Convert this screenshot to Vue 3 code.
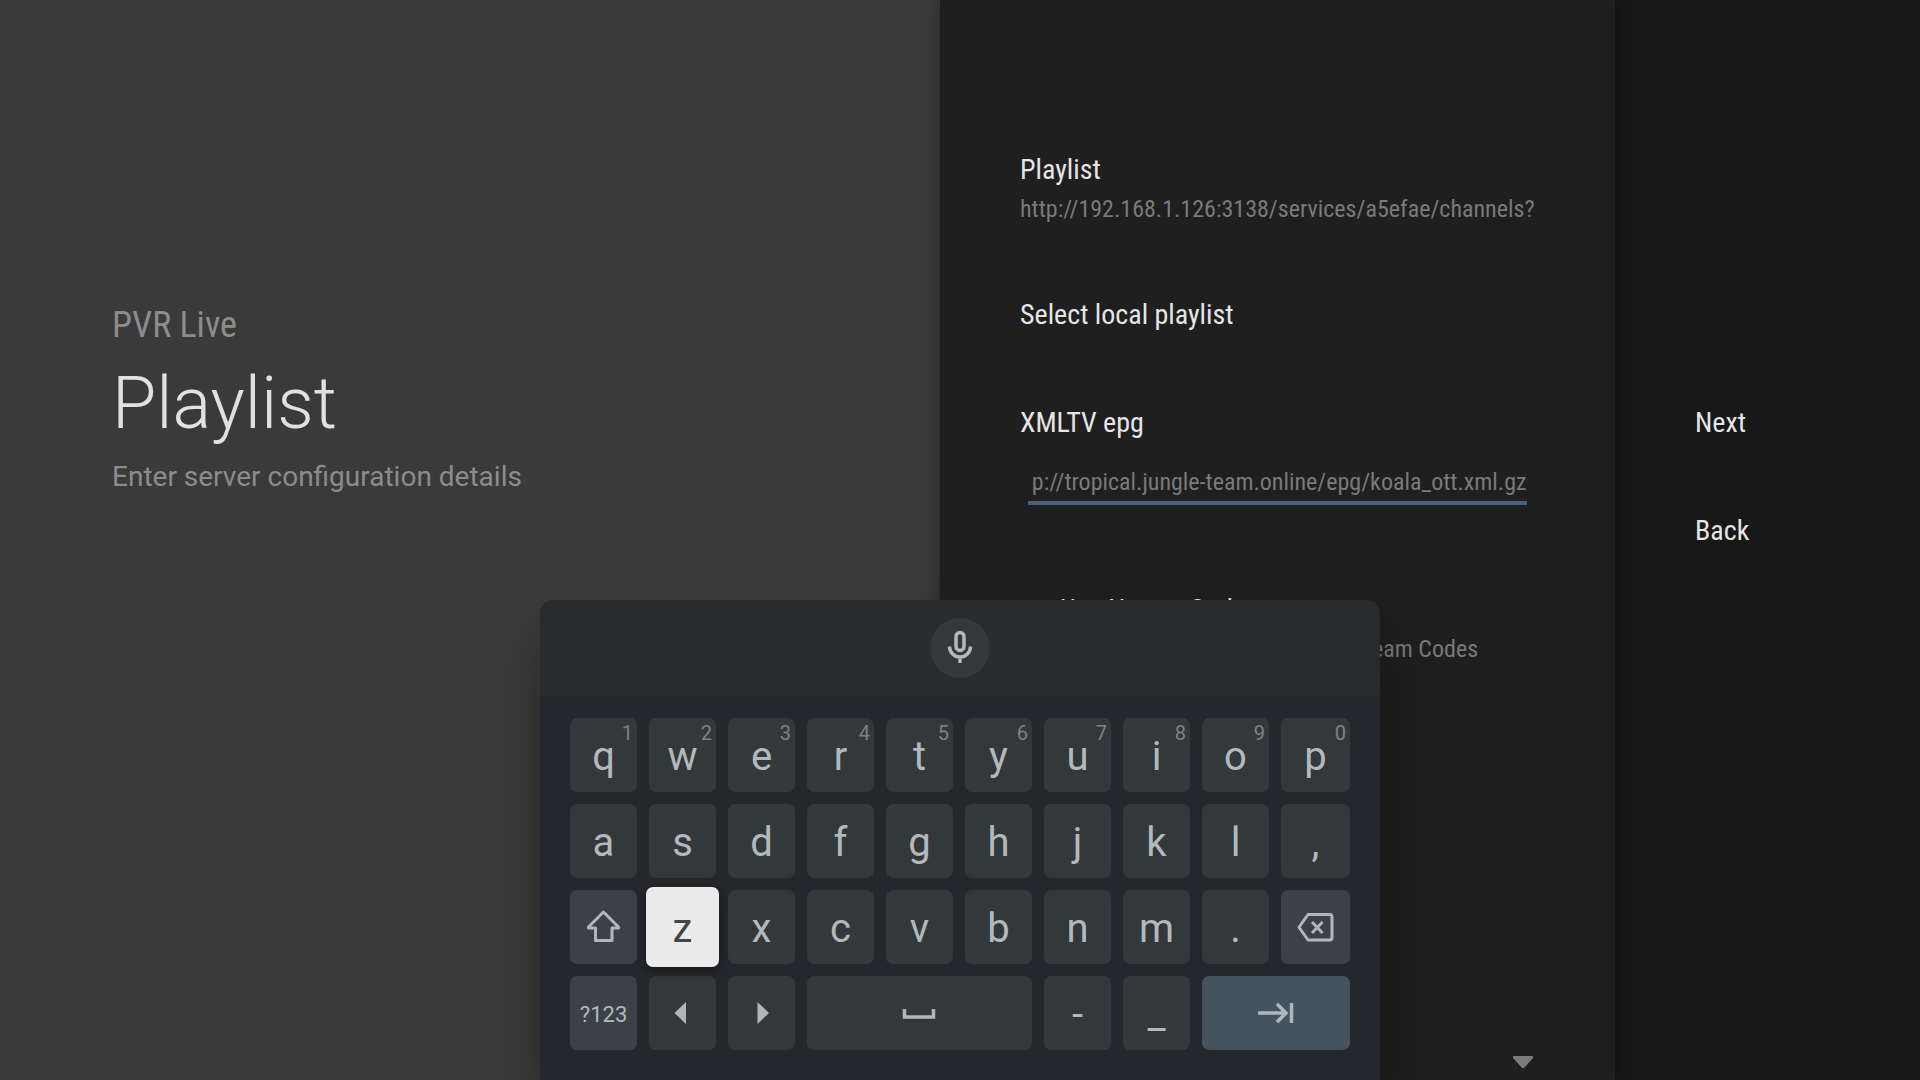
<script setup>
import { ref, onMounted } from 'vue'

const playlistUrl = 'http://192.168.1.126:3138/services/a5efae/channels?'
const epgUrl = ref('http://tropical.jungle-team.online/epg/koala_ott.xml.gz')
const neutroCodes = ref(false)
const epgInput = ref(null)

const rows = [
  'qwertyuiop'.split('').map((label, i) => ({ label, hint: String((i + 1) % 10) })),
  'asdfghjkl,'.split('').map((label) => ({ label })),
  [
    { icon: 'shift', name: 'Shift', kind: 'fn' },
    { label: 'z', kind: 'focused' },
    ...'xcvbnm.'.split('').map((label) => ({ label })),
    { icon: 'backspace', name: 'Backspace', kind: 'fn' },
  ],
  [
    { label: '?123', kind: 'fn', small: true },
    { icon: 'left', name: 'Cursor left' },
    { icon: 'right', name: 'Cursor right' },
    { icon: 'space', name: 'Space', span: 3 },
    { label: '-' },
    { label: '_' },
    { icon: 'tab', name: 'Next field', kind: 'action', span: 2 },
  ],
]
const keys = rows.flat()

// Show the end of the address, where the caret would be
onMounted(() => {
  epgInput.value.scrollLeft = epgInput.value.scrollWidth
})
</script>

<template>
  <div class="screen">
    <section class="guidance">
      <p class="breadcrumb">PVR Live</p>
      <h1>Playlist</h1>
      <p class="description">Enter server configuration details</p>
    </section>

    <main class="settings">
      <div class="item">
        <h2>Playlist</h2>
        <p class="value">{{ playlistUrl }}</p>
      </div>
      <div class="item">
        <h2>Select local playlist</h2>
      </div>
      <div class="item">
        <label class="title" for="epg">XMLTV epg</label>
        <input id="epg" ref="epgInput" v-model="epgUrl" class="field" type="text" />
      </div>
      <div class="item check">
        <input id="neutro" v-model="neutroCodes" type="checkbox" />
        <div class="check-text">
          <label class="title" for="neutro">Use Neutro Codes</label>
          <p class="value">Activate if the EPG uses Jungle Team Codes</p>
        </div>
      </div>
      <svg class="more" viewBox="0 0 20 12" aria-hidden="true"><path d="M0 0h20v2l-9 10h-2L0 2z" /></svg>
    </main>

    <nav class="actions">
      <button type="button">Next</button>
      <button type="button">Back</button>
    </nav>

    <div class="keyboard">
      <div class="toolbar">
        <button class="mic" type="button" aria-label="Voice input">
          <svg viewBox="0 0 36 36" width="36" height="36">
            <rect x="14" y="2.5" width="8" height="18" rx="4" />
            <path d="M7.5 16.500a10.500 10.500 0 0 0 21 0M18 27v6" />
          </svg>
        </button>
      </div>
      <div class="keys">
        <button
          v-for="(key, i) in keys"
          :key="i"
          type="button"
          class="key"
          :class="[key.kind, { small: key.small, wide2: key.span === 2, wide3: key.span === 3 }]"
          :aria-label="key.name"
        >
          <span v-if="key.label">{{ key.label }}</span>
          <span v-if="key.hint" class="hint">{{ key.hint }}</span>
          <svg v-if="key.icon" class="icon" viewBox="0 0 40 40" width="40" height="40">
            <path v-if="key.icon === 'shift'" d="M19.500 4 34.500 19v1h-6.500V32.500H11.500V20H4.500v-1z" />
            <template v-else-if="key.icon === 'backspace'">
              <path d="M12 6.500H33.500a2.500 2.500 0 0 1 2.500 2.500v20.500a2.500 2.500 0 0 1-2.500 2.500H12L3 19.250z" />
              <path d="m16 14 10.500 11M26.500 14 16 25" />
            </template>
            <path v-else-if="key.icon === 'left'" class="solid" d="M23 8v22L11.500 19z" />
            <path v-else-if="key.icon === 'right'" class="solid" d="M15.500 8v22L27 19z" />
            <path v-else-if="key.icon === 'space'" class="thick" d="M4.500 15v8h29v-8" />
            <path v-else d="M2 19H30M21 10l9 9-9 9M35.500 9v20" class="thick" />
          </svg>
        </button>
      </div>
    </div>
  </div>
</template>

<style>
body {
  background: #3a3a3a;
}
</style>

<style scoped>
.screen {
  position: relative;
  display: flex;
  min-height: 100vh;
  overflow: hidden;
  background: #3a3a3a;
  font-family: Roboto, sans-serif;
}

h1,
h2,
p {
  margin: 0;
  font-weight: 400;
}

button {
  padding: 0;
  border: 0;
  background: none;
  font-family: inherit;
  cursor: pointer;
}

.guidance {
  flex: 1;
  padding: 301px 48px 0 112px;
}

.breadcrumb {
  color: #8c8c8c;
  font-family: "Roboto Condensed", Roboto, sans-serif;
  font-size: 36px;
  line-height: 48px;
}

.guidance h1 {
  margin: 11px 0;
  color: #e1e1e1;
  font-size: 72px;
  font-weight: 300;
  line-height: 88px;
}

.description {
  color: #8c8c8c;
  font-size: 28px;
  line-height: 36px;
}

.settings {
  position: relative;
  display: flex;
  flex-direction: column;
  gap: 72px;
  box-sizing: border-box;
  width: 675px;
  padding: 152px 80px 0;
  background: #1f1f1f;
  box-shadow: 0 0 16px rgba(0, 0, 0, 0.35);
  font-family: "Roboto Condensed", Roboto, sans-serif;
}

.item h2,
.title {
  display: block;
  color: #e6e6e6;
  font-size: 28px;
  line-height: 36px;
}

.value {
  margin-top: 5px;
  overflow: hidden;
  color: #7a7a7a;
  font-size: 24px;
  line-height: 32px;
  white-space: nowrap;
}

.field {
  display: block;
  box-sizing: border-box;
  width: 499px;
  height: 39px;
  margin: 25px 8px 15px;
  padding: 0 0 3px 4px;
  border: 0;
  border-bottom: 4px solid #47637c;
  outline: 0;
  background: none;
  color: #7a7a7a;
  font-family: inherit;
  font-size: 24px;
  line-height: 32px;
}

.check {
  display: flex;
  gap: 16px;
}

.check input {
  width: 24px;
  height: 24px;
  margin: 26px 0 0;
}

.more {
  position: absolute;
  right: 82px;
  bottom: 12px;
  width: 20px;
  height: 12px;
  fill: #7b7b7b;
}

.actions {
  display: flex;
  flex-direction: column;
  align-items: flex-start;
  gap: 72px;
  box-sizing: border-box;
  width: 305px;
  padding: 405px 80px 0;
  background: #181818;
}

.actions button {
  color: #e6e6e6;
  font-family: "Roboto Condensed", Roboto, sans-serif;
  font-size: 28px;
  line-height: 36px;
}

.keyboard {
  position: absolute;
  right: 0;
  bottom: 0;
  left: 0;
  width: 840px;
  margin: 0 auto;
  border-radius: 14px 14px 0 0;
  background: #24282c;
  box-shadow: 0 32px 56px rgba(0, 0, 0, 0.3);
}

.toolbar {
  display: flex;
  align-items: center;
  justify-content: center;
  height: 96px;
  border-radius: 14px 14px 0 0;
  background: #282c2f;
}

.mic {
  display: flex;
  align-items: center;
  justify-content: center;
  width: 60px;
  height: 60px;
  border-radius: 50%;
  background: #34383b;
}

.mic svg {
  fill: none;
  stroke: #b3b8bd;
  stroke-width: 3.5;
}

.keys {
  display: grid;
  grid-template-columns: repeat(9, 67px) 1fr;
  grid-auto-rows: 74px;
  gap: 12px;
  padding: 22px 30px 30px;
}

.key {
  position: relative;
  display: flex;
  align-items: center;
  justify-content: center;
  padding-top: 4px;
  border-radius: 7px;
  background: #33383b;
  color: #b3b8bc;
  font-size: 40px;
  line-height: 48px;
}

.key.fn {
  background: #3a4248;
}

.key.action {
  background: #44535e;
}

.key.focused {
  z-index: 1;
  margin: -3px;
  background: #ebebeb;
  box-shadow: 0 4px 12px rgba(0, 0, 0, 0.4);
  color: #444;
}

.key.small {
  font-size: 22px;
}

.wide2 {
  grid-column: span 2;
}

.wide3 {
  grid-column: span 3;
}

.hint {
  position: absolute;
  top: 3px;
  right: 4px;
  color: #7d8286;
  font-size: 20px;
  line-height: 24px;
}

.icon {
  margin-bottom: 2px;
  fill: none;
  stroke: #b0b6bc;
  stroke-width: 3;
  stroke-linejoin: round;
}

.icon .thick {
  stroke-width: 3.5;
  stroke-linejoin: miter;
}

.icon .solid {
  fill: #b0b6bc;
  stroke: none;
}
</style>
